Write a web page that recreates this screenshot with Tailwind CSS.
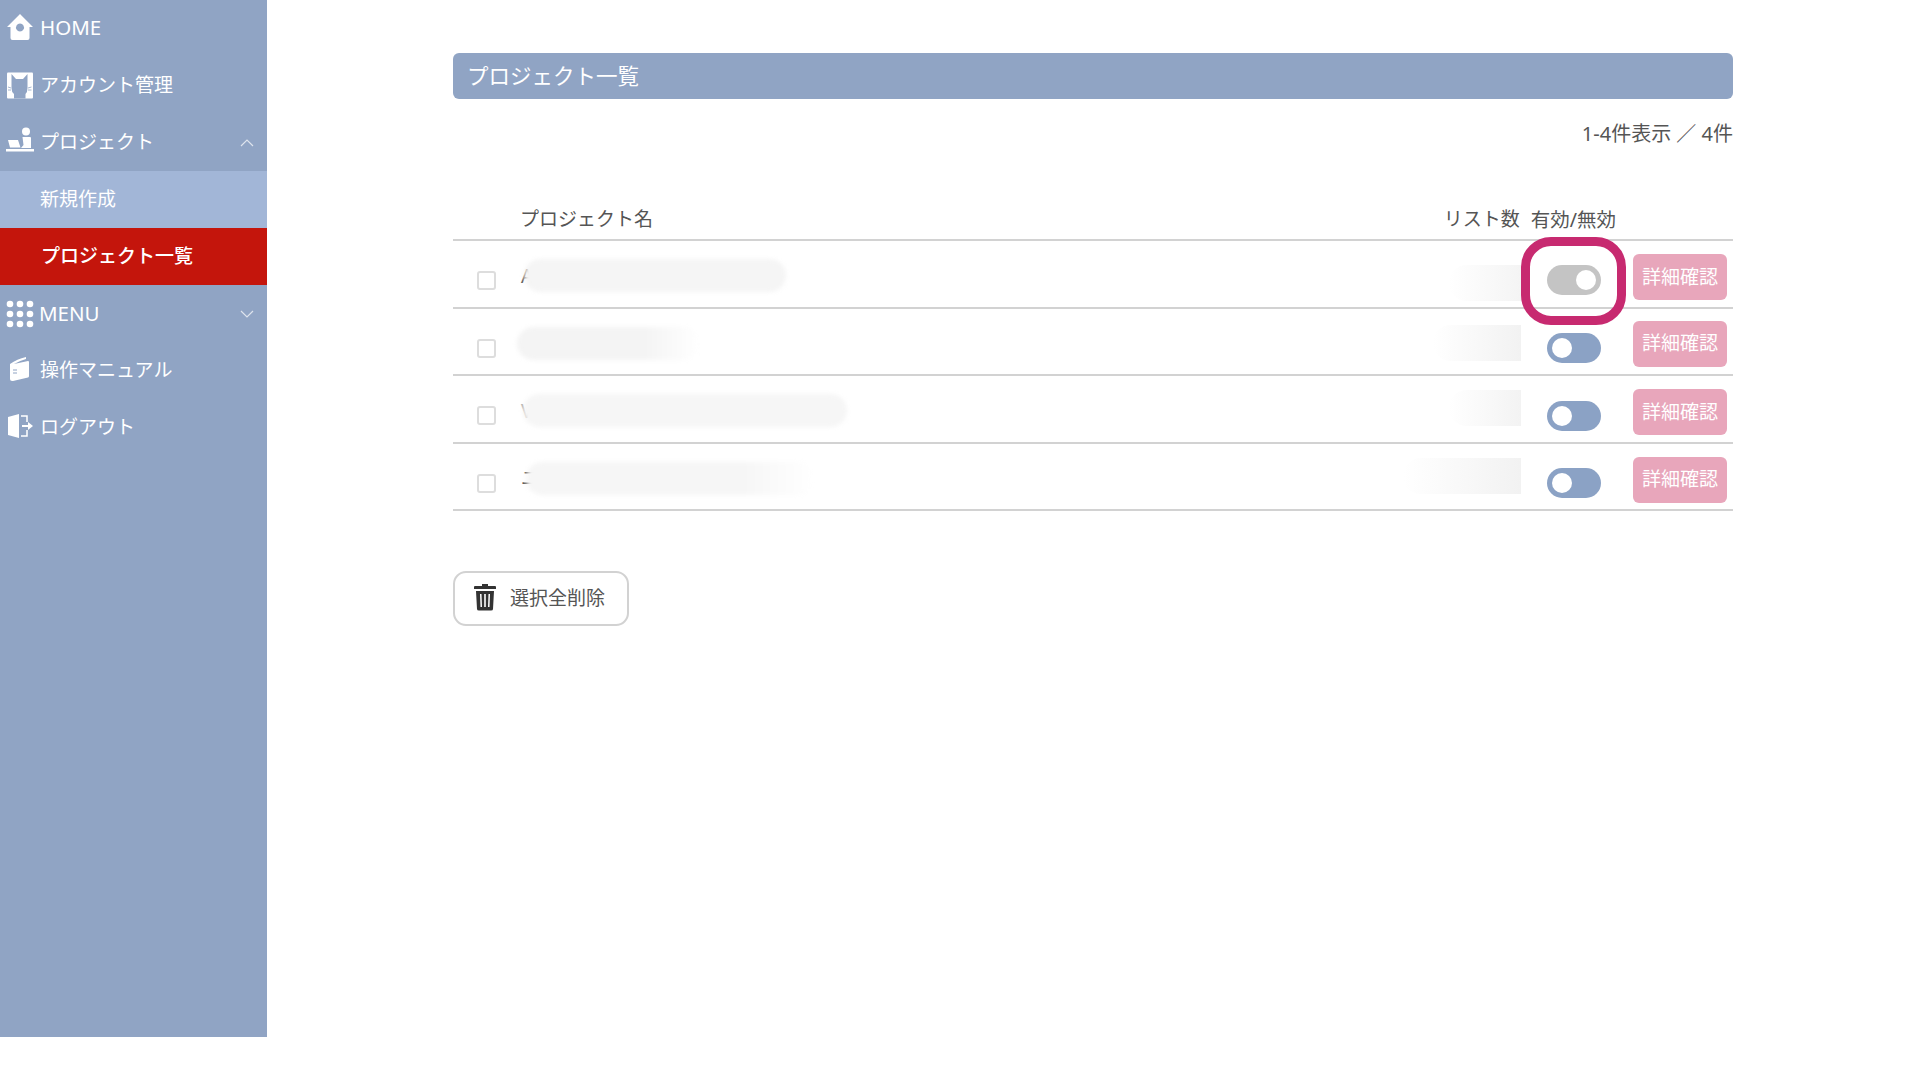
<!doctype html>
<html lang="ja">
  <head>
    <meta charset="UTF-8" />
    <title>プロジェクト一覧</title>
    <script src="https://cdn.jsdelivr.net/npm/@tailwindcss/browser@4"></script>
  </head>
  <body class="relative h-[1080px] overflow-hidden bg-white font-['Noto_Sans','Noto_Sans_CJK_JP',sans-serif] text-[#555]">
    <div class="flex items-start">
      <!-- Sidebar -->
      <aside class="h-[1037px] w-[267px] shrink-0 bg-[#90a4c4] text-[19px] leading-none text-white">
        <a class="flex h-[57px] items-center pb-[3px] pl-[6px] text-[20.500px]">
          <svg class="-mt-[1px] mr-[6px] h-[28px] w-[28px]" viewBox="0 0 28 28">
            <path fill="#fff" fill-rule="evenodd" d="M14 1 L27 14 L23.500 14 L23.500 25 Q23.500 27 21.500 27 L6.500 27 Q4.500 27 4.500 25 L4.500 14 L1 14 Z M14 10.500 a4 4 0 1 0 0.010 0 Z" />
          </svg>
          HOME
        </a>
        <a class="flex h-[57px] items-center pl-[7px]">
          <svg class="mr-[6px] h-[27px] w-[27px]" viewBox="0 0 27 27">
            <rect width="26" height="26" x="0" y="0.500" rx="1" fill="#fff" />
            <path fill="#90a4c4" d="M4.500 2 L9 7 H16 L20.500 2 V16 Q20.500 20 18.500 22 V26.500 H7 V22 Q4.500 20 4.500 16 Z" />
            <path stroke="#90a4c4" stroke-width="0.800" d="M1 15 L4 16 M1 18 H4 M24.500 15 L21 16 M24.500 18 H21" />
          </svg>
          アカウント管理
        </a>
        <a class="flex h-[57px] items-center pl-[6px] pr-[13px]">
          <svg class="-mt-[3px] mr-[6px] h-[28px] w-[28px]" viewBox="0 0 28 28">
            <circle cx="20" cy="4.500" r="4" fill="#fff" />
            <path fill="#fff" d="M16.500 10 H24 Q25 10 25 11 V21 H15 L17.500 18 Z" />
            <path fill="#fff" d="M2 13 H12 L14.500 20.500 H4 Z M0 22 H28 V24.500 H0 Z" />
          </svg>
          プロジェクト
          <svg class="ml-auto h-[10px] w-[14px]" viewBox="0 0 14 10" fill="none" stroke="#fff" stroke-opacity="0.7" stroke-width="1.200">
            <path d="M1 8 L7 2 L13 8" />
          </svg>
        </a>
        <a class="flex h-[57px] items-center bg-[#a2b6d7] pl-[40px]">新規作成</a>
        <a class="flex h-[57px] items-center bg-[#c4150c] pl-[41px] font-medium">プロジェクト一覧</a>
        <a class="flex h-[57px] items-center pl-[6px] pr-[13px] text-[20.500px]">
          <svg class="mr-[5px] h-[28px] w-[28px]" viewBox="0 0 28 28" fill="#fff">
            <circle cx="4" cy="4" r="3.300" /><circle cx="14" cy="4" r="3.300" /><circle cx="24" cy="4" r="3.300" />
            <circle cx="4" cy="14" r="3.300" /><circle cx="14" cy="14" r="3.300" /><circle cx="24" cy="14" r="3.300" />
            <circle cx="4" cy="24" r="3.300" /><circle cx="14" cy="24" r="3.300" /><circle cx="24" cy="24" r="3.300" />
          </svg>
          MENU
          <svg class="ml-auto h-[10px] w-[14px]" viewBox="0 0 14 10" fill="none" stroke="#fff" stroke-opacity="0.7" stroke-width="1.200">
            <path d="M1 2 L7 8 L13 2" />
          </svg>
        </a>
        <a class="flex h-[57px] items-center pl-[9px]">
          <svg class="-mt-[3px] mr-[8px] h-[28px] w-[23px]" viewBox="0 0 23 26">
            <path fill="#fff" d="M1 8 Q8 3 17 1 L17 3 Q10 5 5 8 L19 5 Q20 5 20 6 L20 20 Q20 21 19 21.500 L4 25 Q1 25.500 1 23 Z" />
            <path stroke="#90a4c4" stroke-width="1" d="M4 14 H8 M4 17 H8" />
          </svg>
          操作マニュアル
        </a>
        <a class="flex h-[57px] items-center pl-[7px]">
          <svg class="-mt-[3px] mr-[7px] h-[26px] w-[26px]" viewBox="0 0 26 26">
            <path fill="#fff" d="M1 4 L12 1 V25 L1 22 Z" />
            <path fill="none" stroke="#fff" stroke-width="1.500" d="M14 3 H20 V9 M20 17 V23 H14" />
            <path fill="#fff" d="M15 12 H21 V9 L26 13 L21 17 V14 H15 Z" />
          </svg>
          ログアウト
        </a>
      </aside>

      <!-- Main -->
      <main class="w-[1280px] ml-[186px] pt-[53px]">
        <h1 class="flex h-[46px] items-center rounded-[6px] bg-[#90a4c4] pl-[14px] pt-[1px] text-[21.500px] text-white">プロジェクト一覧</h1>
        <p class="mt-[21px] text-right text-[20px] leading-[28px]">1-4件表示 ／ 4件</p>

        <div class="mt-[52px] flex h-[41px] items-center border-b-2 border-[#d2d2d2] text-[19px] leading-none">
          <span class="ml-[67px] flex-1">プロジェクト名</span>
          <span class="mr-[11px]">リスト数</span>
          <span class="mr-[117px] text-[19.500px]">有効/無効</span>
        </div>

        <!-- Row 1 -->
        <div class="flex h-[67.500px] items-start border-b-2 border-[#d2d2d2]">
          <span class="ml-[24px] mt-[30px] h-[19px] w-[19px] rounded-[3px] border-2 border-[#ddd]"></span>
          <div class="ml-[25px] flex flex-1 items-center pt-[18px]">
            <span class="text-[19px] leading-[20px]">A</span>
            <span class="-ml-[9px] h-[33px] w-[262px] rounded-full bg-[#f5f5f5] blur-[2px]"></span>
          </div>
          <span class="mt-[24px] h-[36px] w-[72px] rounded-l-full bg-linear-to-r from-white to-[#f4f4f4]"></span>
          <span class="relative ml-[26px] mt-[24px] h-[30px] w-[54px] rounded-full bg-[#c4c4c4]">
            <span class="absolute right-[5px] top-[5px] h-[20px] w-[20px] rounded-full bg-white"></span>
          </span>
          <a class="ml-[32px] mr-[6px] mt-[13px] flex h-[46px] w-[94px] items-center justify-center rounded-[6px] bg-[#e8a6bb] text-[19px] text-white">詳細確認</a>
        </div>
        <!-- Row 2 -->
        <div class="flex h-[67.500px] items-start border-b-2 border-[#d2d2d2]">
          <span class="ml-[24px] mt-[30px] h-[19px] w-[19px] rounded-[3px] border-2 border-[#ddd]"></span>
          <div class="ml-[21px] flex flex-1 items-center pt-[18px]">
            <span class="h-[33px] w-[182px] rounded-full bg-linear-to-r from-[#f4f4f4] from-70% to-white blur-[2px]"></span>
          </div>
          <span class="mt-[16px] h-[36px] w-[88px] rounded-l-full bg-linear-to-r from-white to-[#f2f2f2]"></span>
          <span class="relative ml-[26px] mt-[24px] h-[30px] w-[54px] rounded-full bg-[#8ba2c5]">
            <span class="absolute left-[5px] top-[5px] h-[20px] w-[20px] rounded-full bg-white"></span>
          </span>
          <a class="ml-[32px] mr-[6px] mt-[12px] flex h-[46px] w-[94px] items-center justify-center rounded-[6px] bg-[#e8a6bb] text-[19px] text-white">詳細確認</a>
        </div>
        <!-- Row 3 -->
        <div class="flex h-[67.500px] items-start border-b-2 border-[#d2d2d2]">
          <span class="ml-[24px] mt-[30px] h-[19px] w-[19px] rounded-[3px] border-2 border-[#ddd]"></span>
          <div class="ml-[25px] flex flex-1 items-center pt-[18px]">
            <span class="text-[19px] leading-[20px] text-[#aaa]">V</span>
            <span class="-ml-[9px] h-[33px] w-[324px] rounded-full bg-[#f6f6f6] blur-[2px]"></span>
          </div>
          <span class="mt-[14px] h-[36px] w-[72px] rounded-l-full bg-linear-to-r from-white to-[#f3f3f3]"></span>
          <span class="relative ml-[26px] mt-[25px] h-[30px] w-[54px] rounded-full bg-[#8ba2c5]">
            <span class="absolute left-[5px] top-[5px] h-[20px] w-[20px] rounded-full bg-white"></span>
          </span>
          <a class="ml-[32px] mr-[6px] mt-[13px] flex h-[46px] w-[94px] items-center justify-center rounded-[6px] bg-[#e8a6bb] text-[19px] text-white">詳細確認</a>
        </div>
        <!-- Row 4 -->
        <div class="flex h-[67.500px] items-start border-b-2 border-[#d2d2d2]">
          <span class="ml-[24px] mt-[30px] h-[19px] w-[19px] rounded-[3px] border-2 border-[#ddd]"></span>
          <div class="ml-[25px] flex flex-1 items-center pt-[18px]">
            <span class="text-[19px] leading-[20px]">ユ</span>
            <span class="-ml-[14px] h-[33px] w-[288px] rounded-full bg-linear-to-r from-[#f6f6f6] from-75% to-white blur-[2px]"></span>
          </div>
          <span class="mt-[14px] h-[36px] w-[118px] rounded-l-full bg-linear-to-r from-white to-[#f2f2f2]"></span>
          <span class="relative ml-[26px] mt-[24px] h-[30px] w-[54px] rounded-full bg-[#8ba2c5]">
            <span class="absolute left-[5px] top-[5px] h-[20px] w-[20px] rounded-full bg-white"></span>
          </span>
          <a class="ml-[32px] mr-[6px] mt-[13px] flex h-[46px] w-[94px] items-center justify-center rounded-[6px] bg-[#e8a6bb] text-[19px] text-white">詳細確認</a>
        </div>

        <button class="mt-[60px] flex h-[55px] w-[176px] items-center rounded-[13px] border-2 border-[#d2d2d2] pl-[19px] text-[19px]">
          <svg class="-mt-[3px] mr-[14px] h-[28px] w-[22px]" viewBox="0 0 22 28" fill="#333">
            <path d="M8 1 H14 V3 H21 Q22 3 22 4 V6 H0 V4 Q0 3 1 3 H8 Z" />
            <path fill-rule="evenodd" d="M2 8 H20 L19 26 Q19 27.500 17 27.500 H5 Q3 27.500 3 26 Z M6 11 L6.500 24 H8 L7.500 11 Z M10.200 11 V24 H11.800 V11 Z M14.500 11 L14 24 H15.500 L16 11 Z" />
          </svg>
          選択全削除
        </button>
      </main>
    </div>

    <!-- Annotation -->
    <div class="absolute left-[1521px] top-[237px] h-[88px] w-[105px] rounded-[30px] border-[9px] border-[#c72a70]"></div>
  </body>
</html>
